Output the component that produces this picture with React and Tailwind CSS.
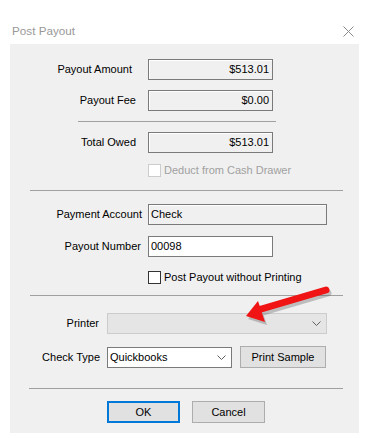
import React from "react";

const font = { fontFamily: '"Liberation Sans", Arial, sans-serif' };

function Chevron() {
  return (
    <svg width="9" height="5" viewBox="0 0 9 5" className="shrink-0">
      <path d="M0.5 0.5 L4.5 4.5 L8.5 0.5" fill="none" stroke="#606060" strokeWidth="1" />
    </svg>
  );
}

export default function App() {
  return (
    <div
      className="relative w-[369px] h-[438px] bg-white text-[11px] text-black overflow-hidden"
      style={font}
    >
      {/* Title bar */}
      <div className="h-[44px] flex items-center justify-between pl-[12px] pr-[15px] pt-[18px]">
        <span className="text-[#999999] text-[11.7px] leading-none">Post Payout</span>
        <svg width="11" height="11" viewBox="0 0 11 11">
          <path d="M0.5 0.5 L10.5 10.5 M10.5 0.5 L0.5 10.5" stroke="#8a8a8a" strokeWidth="1" fill="none" />
        </svg>
      </div>

      {/* Panel */}
      <div className="mx-[10px] h-[389px] bg-[#f0f0f0] flex flex-col pt-[15px]">
        {/* Payout Amount */}
        <div className="flex items-center h-[21px]">
          <div className="w-[122px] text-right leading-none">Payout Amount</div>
          <div className="ml-[16px] w-[125px] h-[21px] border border-[#7a7a7a] shadow-[inset_1px_1px_0_#ffffff] bg-[#f0f0f0] flex items-center justify-end pr-[3px] leading-none">
            $513.01
          </div>
        </div>
        {/* Payout Fee */}
        <div className="flex items-center h-[21px] mt-[10px]">
          <div className="w-[126px] text-right leading-none">Payout Fee</div>
          <div className="ml-[12px] w-[125px] h-[21px] border border-[#7a7a7a] shadow-[inset_1px_1px_0_#ffffff] bg-[#f0f0f0] flex items-center justify-end pr-[3px] leading-none">
            $0.00
          </div>
        </div>
        <div className="mt-[10px] ml-[68px] w-[198px] h-px bg-[#a0a0a0]" />
        {/* Total Owed */}
        <div className="flex items-center h-[21px] mt-[10px]">
          <div className="w-[126px] text-right leading-none">Total Owed</div>
          <div className="ml-[12px] w-[125px] h-[21px] border border-[#7a7a7a] shadow-[inset_1px_1px_0_#ffffff] bg-[#f0f0f0] flex items-center justify-end pr-[3px] leading-none">
            $513.01
          </div>
        </div>
        {/* Deduct checkbox */}
        <div className="flex items-center h-[13px] mt-[11px] ml-[138px]">
          <div className="w-[13px] h-[13px] border border-[#cccccc] bg-white" />
          <span className="ml-[3px] text-[#a0a0a0] leading-none">Deduct from Cash Drawer</span>
        </div>
        <div className="mt-[13px] ml-[20px] w-[313px] h-px bg-[#a0a0a0]" />
        {/* Payment Account */}
        <div className="flex items-center h-[21px] mt-[13px]">
          <div className="w-[132px] text-right leading-none">Payment Account</div>
          <div className="ml-[6px] w-[179px] h-[21px] border border-[#7a7a7a] shadow-[inset_1px_1px_0_#ffffff] bg-[#f0f0f0] flex items-center pl-[2px] leading-none">
            Check
          </div>
        </div>
        {/* Payout Number */}
        <div className="flex items-center h-[21px] mt-[11px]">
          <div className="w-[131px] text-right leading-none">Payout Number</div>
          <div className="ml-[7px] w-[125px] h-[21px] border border-[#7a7a7a] bg-white flex items-center pl-[2px] leading-none">
            00098
          </div>
        </div>
        {/* Post without printing */}
        <div className="flex items-center h-[13px] mt-[14px] ml-[138px]">
          <div className="w-[13px] h-[13px] border border-[#333333] bg-white" />
          <span className="ml-[3px] leading-none">Post Payout without Printing</span>
        </div>
        <div className="mt-[11px] ml-[20px] w-[313px] h-px bg-[#a0a0a0]" />
        {/* Printer */}
        <div className="flex items-center h-[21px] mt-[17px]">
          <div className="w-[89px] text-right leading-none">Printer</div>
          <div className="ml-[8px] w-[220px] h-[21px] border border-[#cccccc] bg-[#e5e5e5] flex items-center justify-end pr-[5px]">
            <Chevron />
          </div>
        </div>
        {/* Check Type */}
        <div className="flex items-center h-[22px] mt-[12px]">
          <div className="w-[90px] text-right leading-none">Check Type</div>
          <div className="ml-[7px] w-[125px] h-[21px] border border-[#7a7a7a] bg-white flex items-center justify-between pl-[2px] pr-[5px] leading-none">
            <span>Quickbooks</span>
            <Chevron />
          </div>
          <div className="ml-[8px] w-[86px] h-[22px] border border-[#adadad] bg-[#e1e1e1] flex items-center justify-center leading-none">
            Print Sample
          </div>
        </div>
        <div className="mt-[20px] ml-[19px] w-[314px] h-px bg-[#a0a0a0]" />
        {/* Buttons */}
        <div className="flex items-center mt-[12px] ml-[97px]">
          <div className="w-[73px] h-[22px] border-2 border-[#0078d7] bg-[#e1e1e1] flex items-center justify-center leading-none">
            OK
          </div>
          <div className="ml-[12px] w-[73px] h-[22px] border border-[#adadad] bg-[#e1e1e1] flex items-center justify-center leading-none">
            Cancel
          </div>
        </div>
      </div>

      {/* Red arrow annotation */}
      <svg
        className="absolute left-0 top-0 pointer-events-none"
        width="369"
        height="438"
        viewBox="0 0 369 438"
      >
        <g opacity="0.35" transform="translate(2,3)">
          <line x1="326" y1="290" x2="258" y2="310" stroke="#606060" strokeWidth="7" strokeLinecap="round" />
          <polygon points="246,316 258,302 265,322" fill="#606060" />
        </g>
        <line x1="326" y1="290" x2="258" y2="310" stroke="#f01414" strokeWidth="7" strokeLinecap="round" />
        <polygon points="246,316 258,301 265,322" fill="#f01414" />
      </svg>
    </div>
  );
}
